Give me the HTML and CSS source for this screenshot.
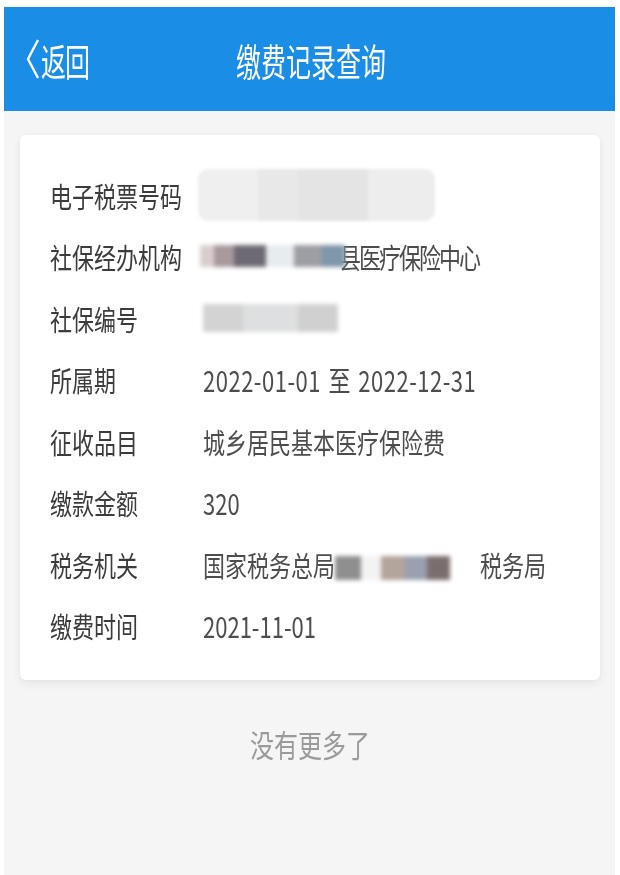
FILE: index.html
```html
<!DOCTYPE html>
<html lang="zh">
<head>
<meta charset="utf-8">
<link rel="stylesheet" href="styles.css">
</head>
<body>
<div class="screen">
  <header class="topbar">
    <div class="back">
      <svg class="chev" width="14" height="42" viewBox="0 0 14 42"><polyline points="12,2 2,21 12,40" fill="none" stroke="#fff" stroke-width="2.4" stroke-linejoin="miter"/></svg>
      <span class="tx back-tx">返回</span>
    </div>
    <div class="title"><span class="tx title-tx">缴费记录查询</span></div>
  </header>
  <main class="content">
    <section class="card">
      <div class="row"><span class="label tx">电子税票号码</span><span class="value"><span class="mask mask1"><i class="m1a"></i><i class="m1b"></i><i class="m1c"></i><i class="m1d"></i></span></span></div>
      <div class="row"><span class="label tx">社保经办机构</span><span class="value"><span class="mask mask2"><i class="m2a"></i><i class="m2b"></i><i class="m2c"></i><i class="m2d"></i><i class="m2e"></i><i class="m2f"></i></span><span class="tx narrow">县医疗保险中心</span></span></div>
      <div class="row"><span class="label tx">社保编号</span><span class="value"><span class="mask mask3"><i class="m3a"></i><i class="m3b"></i><i class="m3c"></i></span></span></div>
      <div class="row"><span class="label tx">所属期</span><span class="value tx date">2022-01-01 至 2022-12-31</span></div>
      <div class="row"><span class="label tx">征收品目</span><span class="value tx">城乡居民基本医疗保险费</span></div>
      <div class="row"><span class="label tx">缴款金额</span><span class="value tx">320</span></div>
      <div class="row"><span class="label tx">税务机关</span><span class="value"><span class="tx">国家税务总局</span><span class="mask mask4"><i class="m4a"></i><i class="m4b"></i><i class="m4c"></i><i class="m4d"></i><i class="m4e"></i></span><span class="tx">税务局</span></span></div>
      <div class="row"><span class="label tx">缴费时间</span><span class="value tx">2021-11-01</span></div>
    </section>
    <p class="nomore"><span class="tx">没有更多了</span></p>
  </main>
</div>
</body>
</html>
```
FILE: styles.css
```css
html, body {
  margin: 0;
  padding: 0;
  background: #ffffff;
}
body {
  font-family: "Noto Sans CJK SC", "Noto Sans", sans-serif;
}
.screen {
  margin: 7px 5px 0 4px;
  height: 868px;
  background: #f5f5f5;
  display: flex;
  flex-direction: column;
}
.tx {
  display: inline-block;
  transform: scaleY(1.3);
}
.topbar {
  height: 104px;
  background: #1a8de7;
  color: #fff;
  display: flex;
  align-items: center;
  position: relative;
}
.back {
  display: flex;
  align-items: center;
  padding-left: 22px;
  gap: 1px;
}
.chev {
  display: block;
}
.back-tx {
  font-size: 25px;
  transform: scaleY(1.5);
  letter-spacing: -1px;
}
.title {
  position: absolute;
  left: 0;
  right: 0;
  text-align: center;
  pointer-events: none;
}
.title-tx {
  font-size: 25px;
  transform: scaleY(1.5);
  margin-left: 3px;
}
.content {
  flex: 1;
  padding: 24px 15px 0 16px;
}
.card {
  background: #fff;
  border-radius: 6px;
  box-shadow: 0 4px 10px rgba(0,0,0,0.06), 0 0 4px rgba(0,0,0,0.03);
  padding: 29px 30px 22px 30px;
  height: 545px;
  box-sizing: border-box;
}
.row {
  height: 61.5px;
  display: flex;
  align-items: center;
  font-size: 22px;
  color: #444;
}
.label {
  width: 153px;
  flex: none;
  color: #3c3c3c;
}
.value {
  display: flex;
  align-items: center;
  color: #4d4d4d;
}
.value.tx {
  display: inline-block;
}
.date {
  letter-spacing: 0.5px;
  word-spacing: 2px;
}
.narrow {
  letter-spacing: -2px;
}
.mask {
  display: flex;
  filter: blur(2px);
}
.mask i {
  display: block;
  height: 100%;
}
.mask1 {
  width: 237px;
  height: 52px;
  margin-left: -5px;
  border-radius: 10px;
  overflow: hidden;
  filter: blur(1.5px);
}
.m1a { width: 60px; background: #efefef; }
.m1b { width: 40px; background: #e8e8e8; }
.m1c { width: 70px; background: #e4e4e4; }
.m1d { width: 67px; background: #ededed; }
.mask2 {
  height: 22px;
  width: 145px;
  margin-left: -3px;
  margin-right: -6px;
  position: relative;
  z-index: 1;
}
.m2a { width: 14px; background: #d8cfcd; }
.m2b { width: 20px; background: #a89a9c; }
.m2c { width: 32px; background: #6d6a73; }
.m2d { width: 28px; background: #e7ecef; }
.m2e { width: 28px; background: #9c9ea3; }
.m2f { width: 23px; background: #7f96ab; }
.mask3 {
  height: 28px;
  width: 135px;
}
.m3a { width: 40px; background: #d3d3d3; }
.m3b { width: 55px; background: #dddfe0; }
.m3c { width: 40px; background: #d0d0d0; }
.mask4 {
  height: 24px;
  width: 115px;
  margin: 8px 30px 0 0;
}
.m4a { width: 26px; background: #8f8f8f; }
.m4b { width: 20px; background: #f3f3f3; }
.m4c { width: 24px; background: #b3a49c; }
.m4d { width: 22px; background: #9aa0b0; }
.m4e { width: 23px; background: #7b6e6e; }
.nomore {
  margin: 46px 0 0 0;
  text-align: center;
  font-size: 24px;
  color: #9a9a9a;
}
```
